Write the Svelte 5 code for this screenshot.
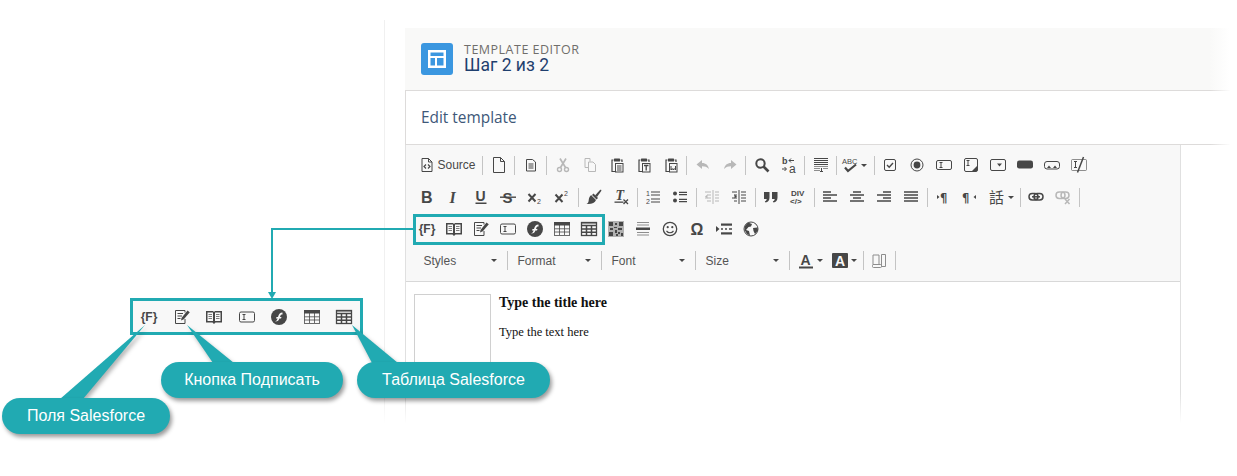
<script>
    const line = 'fill="none" stroke="currentColor"';
    const clip = `<path d="M4.500 3H3v11.500h3M11.500 3H13v2" ${line} stroke-width="1.200"/><rect x="5" y="1.500" width="6" height="3" rx=".5"/><rect x="6.500" y="6.500" width="7.500" height="8.500" fill="#f8f8f8" stroke="currentColor"/>`;

    // small 16x16 pictures for the editor toolbar
    const icons = {
        source: `<path d="M3 1.500h6.500L13 5v9.500H3z" ${line}/><path d="M9.500 1.500V5H13" ${line}/><path d="M7 7.500 5 9.500l2 2M9 7.500l2 2-2 2" ${line} stroke-width="1.200"/>`,
        newpage: `<path d="M2.500 .5h7L13.500 4.500v11h-11z" ${line}/><path d="M9.500 .5v4h4" ${line}/>`,
        preview: `<path d="M3.500 2.500h6L12.500 5v9h-9z" ${line}/><path d="M5.500 7h5M5.500 9h5M5.500 11h5" ${line}/>`,
        cut: `<circle cx="4.500" cy="12.500" r="2" ${line} stroke-width="1.400"/><circle cx="11.500" cy="12.500" r="2" ${line} stroke-width="1.400"/><path d="M5.500 10.500 11 1.500M10.500 10.500 5 1.500" ${line} stroke-width="1.700"/>`,
        copy: `<path d="M3 1.500h5v3M3 1.500v9h3" ${line}/><path d="M6.500 5h4.500l2.500 2.500v7h-7z" ${line}/>`,
        paste: `${clip}<path d="M8 9h4.500M8 11h4.500M8 13h4.500" ${line}/>`,
        pastetext: `${clip}<path d="M8 8.500h4.500M10.200 8.500v5" ${line} stroke-width="1.300"/>`,
        pasteword: `${clip}<path d="M8 9v4l1.200-1.500 1 1.500 1-1.500L12.500 13V9" ${line}/>`,
        undo: `<path d="M7 3 1.500 7.500 7 12V9.300c3 0 5 .7 7 2.700-.8-3.700-3-6-7-6z"/>`,
        redo: `<path d="M9 3l5.500 4.500L9 12V9.300c-3 0-5 .7-7 2.700.8-3.700 3-6 7-6z"/>`,
        find: `<circle cx="6.500" cy="6.500" r="4.200" ${line} stroke-width="2"/><path d="m9.500 9.500 5 5" ${line} stroke-width="2.600"/>`,
        replace: `<text x="1" y="7" font-size="9" font-family="Liberation Sans" font-weight="bold">b</text><text x="8" y="15.500" font-size="12" font-family="Liberation Sans">a</text><path d="M8 3.500h5M10 1.500l-2 2 2 2M1 12h4M3.500 10l2 2-2 2" ${line}/>`,
        templates: `<path d="M1 1.500h14M1 3.500h14M1 5.500h14M1 7.500h14" ${line} stroke-width="1.200"/><path d="M1 9.500h14M1 11.500h6M10 11.500h5M1 13.500h6" ${line} stroke-width="1.200" opacity=".6"/><path d="M8.500 11v3.500M7 14.500h3" ${line}/>`,
        spell: `<text x="0" y="7" font-size="7.500" font-family="Liberation Sans">ABC</text><path d="m3 10.500 3 3.500 8-6.500" ${line} stroke-width="2.200"/>`,
        checkbox: `<rect x="2.500" y="2.500" width="11" height="11" rx="1.500" ${line}/><path d="m5 8 2.200 2.200L11 6" ${line} stroke-width="1.400"/>`,
        radio: `<circle cx="8" cy="8" r="6" ${line}/><circle cx="8" cy="8" r="3.400"/>`,
        textfield: `<rect x=".5" y="3.500" width="15" height="9" rx="1.500" ${line}/><path d="M3.500 5.500h3M3.500 10.500h3M5 5.500v5" ${line}/>`,
        textarea: `<rect x="1.500" y="1.500" width="13" height="13" rx="1.500" ${line}/><path d="M3.500 3.500h3M3.500 8.500h3M5 3.500v5" ${line}/><path d="M14 9v5H9z"/>`,
        select: `<rect x=".5" y="2.500" width="15" height="11" rx="1.500" ${line}/><path d="M7 6.500h5L9.500 9.500z"/>`,
        button: `<rect y="3.500" width="16" height="8" rx="2.200"/>`,
        imagebutton: `<rect x=".5" y="4.500" width="15" height="7.500" rx="2.500" ${line}/><path d="m3 11 2-2.500 2 2.500zM9 11l2-2.500 2 2.500z"/>`,
        hidden: `<rect x=".5" y="2.500" width="15" height="11" rx="1" ${line} opacity=".6"/><path d="M3 4.500h3M3 10.500h3M4.500 4.500v6" ${line}/><path d="M12.500 0 6.500 15.500" ${line} stroke-width="1.500"/>`,
        bold: `<text x="2" y="14" font-size="16" font-weight="bold" font-family="Liberation Sans">B</text>`,
        italic: `<text x="3.500" y="14" font-size="16" font-weight="bold" font-style="italic" font-family="Liberation Serif">I</text>`,
        underline: `<text x="2.500" y="11.500" font-size="14" font-weight="bold" font-family="Liberation Sans">U</text><rect x="2.500" y="13.500" width="11" height="1.500"/>`,
        strike: `<text x="2.500" y="13.500" font-size="15" font-weight="bold" font-family="Liberation Sans">S</text><rect x="0" y="7.500" width="16" height="1.400"/>`,
        sub: `<path d="m1.500 5 7 7.500M8.500 5l-7 7.500" ${line} stroke-width="2"/><text x="10" y="15" font-size="7" font-family="Liberation Sans">2</text>`,
        sup: `<path d="m1.500 5.500 7 7.500M8.500 5.500l-7 7.500" ${line} stroke-width="2"/><text x="10" y="7" font-size="7" font-family="Liberation Sans">2</text>`,
        brush: `<path d="M9 6.500 14 1c.9-.7 1.700 0 1.200 1L11 8z"/><path d="M7.500 4.500 12 9l-1.500 1.500-4.500-4.500z"/><path d="M5.500 6.500 10 11c-1 2.800-4.500 4.500-9.500 4 2-1 2-2.500 2.300-4.500.2-1.800 1-3.500 2.700-4.500z"/>`,
        clear: `<text x="2.500" y="11" font-size="14" font-weight="bold" font-style="italic" font-family="Liberation Serif">T</text><rect x="1.500" y="12.500" width="9" height="1.300"/><path d="m10.500 10.500 4.500 4.500M15 10.500 10.500 15" ${line} stroke-width="1.300"/>`,
        ol: `<text x="1" y="7" font-size="7" font-family="Liberation Sans">1</text><text x="1" y="14.500" font-size="7" font-family="Liberation Sans">2</text><path d="M6 3h9M6 6h9M6 10h9M6 13h9" ${line} stroke-width="1.200"/>`,
        ul: `<circle cx="3" cy="4.500" r="2"/><circle cx="3" cy="11.500" r="2"/><path d="M7 3.300h8M7 5.700h8M7 10.300h8M7 12.700h8" ${line} stroke-width="1.200"/>`,
        outdent: `<path d="M9 1v14M1 3h6M3 6h4M1 9h6M3 12h4M11 3h4M11 6h4M11 9h4M11 12h4" ${line}/><path d="M1 7.500 3.500 5.500v4z"/>`,
        indent: `<path d="M8 1v14M1 3h5M3 6h3M1 9h5M3 12h3M10 3h5M10 6h5M10 9h5M10 12h5" ${line}/><path d="M6 7.500 3.500 5.500v4z"/>`,
        quote: `<path d="M1 3h5.500v5.500c0 3-1.500 4.800-4 5l-.7-1.300c1.300-.3 1.800-1 1.900-2.200H1zM9 3h5.500v5.500c0 3-1.500 4.800-4 5l-.7-1.300c1.300-.3 1.800-1 1.900-2.200H9z"/>`,
        div: `<text x="1" y="7" font-size="8" font-family="Liberation Sans" font-weight="bold">DIV</text><text x="0" y="15" font-size="8" font-family="Liberation Sans" font-weight="bold">&lt;/&gt;</text>`,
        left: `<path d="M1 3h8M1 6h14M1 9h8M1 12h14" ${line} stroke-width="1.500"/>`,
        center: `<path d="M4 3h8M1 6h14M4 9h8M1 12h14" ${line} stroke-width="1.500"/>`,
        right: `<path d="M7 3h8M1 6h14M7 9h8M1 12h14" ${line} stroke-width="1.500"/>`,
        justify: `<path d="M1 3h14M1 6h14M1 9h14M1 12h14" ${line} stroke-width="1.500"/>`,
        ltr: `<path d="M2 6v4l2.500-2z"/><text x="5" y="13" font-size="11.500" font-weight="bold" font-family="DejaVu Sans">¶</text>`,
        rtl: `<text x="0" y="13" font-size="11.500" font-weight="bold" font-family="DejaVu Sans">¶</text><path d="M14 6v4l-2.500-2z"/>`,
        lang: `<text x="0" y="14" font-size="15" font-family="Noto Sans CJK TC">話</text>`,
        link: `<rect x="1" y="4.500" width="9" height="6.500" rx="3.200" ${line} stroke-width="1.500"/><rect x="6" y="4.500" width="9" height="6.500" rx="3.200" ${line} stroke-width="1.500"/><path d="M4 7.800h8" ${line} stroke-width="1.500"/>`,
        unlink: `<rect x="1" y="3" width="9" height="6.500" rx="3.200" ${line} stroke-width="1.500"/><rect x="6" y="3" width="8" height="6.500" rx="3.200" ${line} stroke-width="1.500"/><path d="m10 10 4.500 5M14.500 10 10 15" ${line} stroke-width="1.500"/>`,
        field: `<text x="8" y="12" text-anchor="middle" font-size="12" font-weight="bold" font-family="Liberation Sans">{F}</text>`,
        book: `<path d="M0 2h7l1 1 1-1h7v11.500H9.500L8 15l-1.500-1.500H0z"/><path d="M1.500 3.500H7v8.500H1.500zM9 3.500h5.500V12H9z" fill="#f8f8f8"/><path d="M2.500 5.500h3.500M2.500 7.500h3.500M2.500 9.500h3.500M10 5.500h3.500M10 7.500h3.500M10 9.500h3.500" ${line} opacity=".7"/>`,
        sign: `<path d="M11 3.500V1.500H1.500v13h9.500V10" ${line}/><path d="M3.500 4.500h5.500M3.500 7h4.500M3.500 9.500h3" ${line}/><path d="m7 11.500.5-2.500L13.500 1.500l2.300 1.700-6 7z"/>`,
        input: `<rect x=".5" y="3" width="15" height="10" rx="1.500" ${line}/><path d="M3.500 5.500h3M3.500 10.500h3M5 5.500v5" ${line}/>`,
        flash: `<circle cx="8" cy="8" r="8"/><path d="M11.500 3.500C9 3.500 8 5 7.500 6.500L7 8H5.500l-.5 1.500h1.600C6 11 5.500 12 4 12.500c2.500.2 3.800-1 4.400-3H10l.5-1.500H9l.4-1.200c.3-.9.800-1.300 2.100-1.300z" fill="#f8f8f8"/>`,
        table: `<rect x=".5" y="1.500" width="15" height="13" ${line} opacity=".8"/><rect x="0" y="1" width="16" height="3.500"/><path d="M5.500 4v10M10.500 4v10M.5 7.800h15M.5 11h15" ${line} opacity=".8"/>`,
        tableDark: `<rect x=".5" y="1.500" width="15" height="13" ${line} stroke-width="1.300"/><rect x="0" y="1" width="16" height="1.500"/><path d="M0 4.500h16M5.500 4.500v10M10.500 4.500v10M.5 8h15M.5 11.200h15" ${line} stroke-width="1.500"/>`,
        qr: `<rect width="16" height="16" opacity=".4"/><path d="M1 1h4v4H1zM11 1h4v4h-4zM1 11h4v4H1zM7 2h2v2H7zM6 6h3v1H6zM10 7h4v2h-4zM2 7h3v2H2zM7 9h2v3H7zM10 11h2v2h-2zM13 12h2v3h-2zM8 13h2v2H8z"/>`,
        hr: `<path d="M2 1.500h12M2 4h12" ${line} opacity=".6"/><rect x="1" y="6.500" width="14" height="2.500"/><path d="M2 11.500h12M2 14h12" ${line} opacity=".6"/>`,
        smile: `<circle cx="8" cy="8" r="6.700" ${line} stroke-width="1.300"/><circle cx="5.700" cy="6.200" r="1.100"/><circle cx="10.300" cy="6.200" r="1.100"/><path d="M4.500 9.800c1.800 2.600 5.200 2.600 7 0" ${line} stroke-width="1.200"/>`,
        omega: `<text x="8" y="14" text-anchor="middle" font-size="16" font-weight="bold" font-family="Liberation Sans">Ω</text>`,
        pagebreak: `<path d="M0 5v6l3.500-3z"/><rect x="5" y="2.500" width="11" height="2.200"/><rect x="5" y="11.300" width="11" height="2.200"/><path d="M5 8h2M9 8h2M13 8h3" ${line} stroke-width="1.500"/>`,
        globe: `<circle cx="8" cy="8" r="7" ${line}/><path d="M5 1.500 9 3 8 5.500 5.500 6 3 9l3 1 1 4.500L4 13 1.500 9 2 5zM10 7l4.500-.5.500 3L12 13l-1.500-3z"/>`,
        color: `<text x="2.500" y="12" font-size="14" font-weight="bold" font-family="Liberation Sans">A</text><rect x="1" y="13.500" width="14" height="2"/>`,
        bgcolor: `<rect width="16" height="15" rx="1"/><text x="3" y="12.500" font-size="14" font-weight="bold" font-family="Liberation Sans" fill="#f8f8f8">A</text>`,
        maximize: `<path d="M2 2h6v9.500H2zM10.500 1.500h4v12h-4z" ${line}/><rect x="1.500" y="11.500" width="9" height="3" rx="1" ${line}/>`
    };

    const rows = [
        [
            ['source'],
            ['newpage'],
            ['preview'],
            ['-cut', '-copy', 'paste', 'pastetext', 'pasteword'],
            ['-undo', '-redo'],
            ['find', 'replace'],
            ['templates'],
            ['spell'],
            ['checkbox', 'radio', 'textfield', 'textarea', 'select', 'button', 'imagebutton', 'hidden']
        ],
        [
            ['bold', 'italic', 'underline', 'strike', 'sub', 'sup'],
            ['brush', 'clear'],
            ['ol', 'ul'],
            ['-outdent', 'indent'],
            ['quote', 'div'],
            ['left', 'center', 'right', 'justify'],
            ['ltr', 'rtl', 'lang'],
            ['link', '-unlink'],
            []
        ],
        [
            ['field', 'book', 'sign', 'input', 'flash', 'table', 'tableDark', 'qr', 'hr', 'smile', 'omega', 'pagebreak', 'globe']
        ]
    ];

    const withArrow = ['spell', 'lang'];
    const combos = ['Styles', 'Format', 'Font', 'Size'];
    const sample = ['field', 'sign', 'book', 'input', 'flash', 'table', 'tableDark'];
</script>

{#snippet icon(name)}
    <svg class="ic" viewBox="0 0 16 16" width="16" height="16" aria-hidden="true">{@html icons[name]}</svg>
{/snippet}

{#snippet arrow()}
    <span class="arrow"></span>
{/snippet}

<div class="page">
    <main class="main">
        <header class="head">
            <div class="logo">
                <svg viewBox="0 0 20 20" width="20" height="20" aria-hidden="true">
                    <path d="M1 1h18v18H1z M3.500 3.500v3.500h13V3.500z M3.500 9v7.500h4.500V9z M10 9v7.500h6.500V9z" fill="#fff" fill-rule="evenodd" />
                </svg>
            </div>
            <div class="titles">
                <div class="kicker">TEMPLATE EDITOR</div>
                <h1>Шаг 2 из 2</h1>
            </div>
        </header>

        <section class="card">
            <h2>Edit template</h2>
        </section>

        <section class="editor">
            <div class="toolbar">
                {#each rows as groups}
                    <div class="row">
                        {#each groups as group, g}
                            {#if g > 0}<span class="sep"></span>{/if}
                            <div class="group">
                                {#each group as item}
                                    {@const off = item.startsWith('-')}
                                    {@const name = off ? item.slice(1) : item}
                                    {#if name === 'source'}
                                        <span class="btn source">{@render icon(name)}<span class="label">Source</span></span>
                                    {:else if withArrow.includes(name)}
                                        <span class="btn drop {name}">{@render icon(name)}{@render arrow()}</span>
                                    {:else}
                                        <span class="btn" class:off>{@render icon(name)}</span>
                                    {/if}
                                {/each}
                            </div>
                        {/each}
                    </div>
                {/each}
                <div class="row last">
                    {#each combos as combo}
                        <div class="combo"><span>{combo}</span>{@render arrow()}</div>
                        <span class="sep"></span>
                    {/each}
                    <div class="colors">
                        <span class="tint">{@render icon('color')}{@render arrow()}</span>
                        <span class="tint">{@render icon('bgcolor')}{@render arrow()}</span>
                    </div>
                    <span class="sep"></span>
                    <div class="group"><span class="btn off dim">{@render icon('maximize')}</span></div>
                    <span class="sep"></span>
                </div>
            </div>

            <div class="content">
                <div class="thumb"></div>
                <div class="copy">
                    <h3>Type the title here</h3>
                    <p>Type the text here</p>
                </div>
            </div>
        </section>
    </main>

    <div class="zoomed">
        {#each sample as name}
            <span class="slot">{@render icon(name)}</span>
        {/each}
    </div>

    <!-- annotation layer over the screenshot -->
    <svg class="marks" width="1237" height="476" aria-hidden="true">
        <rect x="414.500" y="215.500" width="189" height="28" fill="none" stroke="#21aab2" stroke-width="3" />
        <path d="M414 229H272V294" fill="none" stroke="#21aab2" stroke-width="2" />
        <path d="M268 292h8l-4 7z" fill="#21aab2" />
        <g class="tails">
            <path d="M145 325 60 399H83z" />
            <path d="M187 325 213 363H234z" />
            <path d="M352 325 398 363H372z" />
        </g>
    </svg>

    <div class="bubble fields">Поля Salesforce</div>
    <div class="bubble sign-btn">Кнопка Подписать</div>
    <div class="bubble table-btn">Таблица Salesforce</div>
</div>

<style>
    :global(body) {
        background: #fff;
        font-family: "Liberation Sans", Arial, sans-serif;
    }

    .page {
        position: relative;
        width: 1237px;
        height: 476px;
        box-sizing: border-box;
        padding-top: 20px;
        overflow: hidden;
        background: #fff;
    }

    /* main column */
    .main {
        position: relative;
        margin-left: 384px;
        width: 846px;
        height: 403px;
        padding: 8px 0 0 20px;
        box-sizing: border-box;
        border-left: 1px solid #f0f0f0;
    }

    .main::after {
        content: "";
        position: absolute;
        left: -1px;
        right: 0;
        bottom: 0;
        height: 30px;
        background: linear-gradient(rgba(255, 255, 255, 0), #fff);
    }

    .head {
        display: flex;
        align-items: center;
        gap: 11px;
        height: 62px;
        box-sizing: border-box;
        padding-left: 16px;
        background: linear-gradient(to right, #f9f9f8 97.500%, rgba(249, 249, 248, 0));
    }

    .logo {
        width: 32px;
        height: 32px;
        border-radius: 3px;
        background: #3b97e0;
        display: flex;
        align-items: center;
        justify-content: center;
    }

    .titles {
        font-family: "Open Sans", sans-serif;
        line-height: 1;
    }

    .kicker {
        font-size: 12.500px;
        color: #706e6b;
        letter-spacing: .5px;
        margin-bottom: 1px;
    }

    h1 {
        margin: 0;
        font-family: Roboto, sans-serif;
        font-size: 17.500px;
        font-weight: 400;
        color: #1f3f6e;
    }

    .card {
        height: 55px;
        box-sizing: border-box;
        display: flex;
        align-items: center;
        padding-left: 15px;
        background: #fff;
        border-style: solid;
        border-width: 1px 0 1px 1px;
        border-image: linear-gradient(to right, #dddbda 97.500%, rgba(221, 219, 218, 0)) 1;
    }

    h2 {
        margin: 0;
        font-family: "Open Sans", sans-serif;
        font-size: 15.400px;
        font-weight: 400;
        color: #3e5879;
    }

    .editor {
        width: 776px;
        height: 278px;
        box-sizing: border-box;
        border: 1px solid #e0e0e0;
        border-top: none;
        border-bottom: none;
    }

    .toolbar {
        background: #f8f8f8;
        border-bottom: 1px solid #d8d8d8;
        padding: 4px 0 5px 7.500px;
        height: 137px;
        box-sizing: border-box;
    }

    .row {
        display: flex;
        align-items: center;
        height: 32px;
        color: #474747;
    }

    .row.last {
        height: 31px;
        font-size: 12px;
    }

    .group {
        display: flex;
        align-items: center;
        padding: 0 2px;
    }

    .group:first-child {
        padding-left: 0;
    }

    .sep {
        width: 1px;
        height: 19px;
        background: #c4c4c4;
        flex: none;
    }

    .btn {
        display: flex;
        align-items: center;
        justify-content: center;
        width: 27px;
        height: 24px;
        flex: none;
    }

    .btn.off {
        color: #b8b8b8;
    }

    .btn.dim {
        color: #8d8d8d;
    }

    .btn.source {
        width: 66.500px;
        justify-content: flex-start;
        padding-left: 5px;
        box-sizing: border-box;
        gap: 3px;
    }

    .label {
        font-size: 12px;
        color: #484848;
    }

    .btn.drop {
        justify-content: flex-start;
        gap: 1px;
    }

    .btn.spell {
        width: 32.500px;
        padding-left: 3px;
        box-sizing: border-box;
    }

    .btn.lang {
        width: 34px;
        padding-left: 5px;
        box-sizing: border-box;
    }

    .arrow {
        width: 0;
        height: 0;
        margin-left: 2px;
        border: 3px solid transparent;
        border-top: 3px solid #474747;
        border-bottom: none;
        flex: none;
    }

    .combo {
        width: 93px;
        box-sizing: border-box;
        display: flex;
        align-items: center;
        justify-content: space-between;
        padding: 0 10px;
        color: #555;
    }

    .colors {
        display: flex;
        padding-left: 8px;
        padding-right: 6px;
        gap: 9px;
    }

    .tint {
        display: flex;
        align-items: center;
        gap: 1px;
    }

    .ic {
        display: block;
        flex: none;
        fill: currentColor;
        overflow: visible;
    }

    /* document preview */
    .content {
        display: flex;
        gap: 8px;
        padding: 12px 0 0 8px;
        font-family: "Liberation Serif", "Times New Roman", serif;
        color: #111;
    }

    .thumb {
        width: 77px;
        height: 90px;
        box-sizing: border-box;
        border: 1px solid #d0d0d0;
    }

    h3 {
        margin: 0 0 14px;
        font-size: 14px;
        font-weight: bold;
        line-height: 17px;
    }

    p {
        margin: 0;
        font-size: 12.500px;
        line-height: 14px;
    }

    /* annotations */
    .marks {
        position: absolute;
        left: 0;
        top: 0;
    }

    .tails {
        fill: #21aab2;
        filter: drop-shadow(2px 3px 2px rgba(0, 0, 0, .3));
    }

    .zoomed {
        position: absolute;
        left: 130px;
        top: 298px;
        width: 233px;
        height: 37px;
        box-sizing: border-box;
        border: 3px solid #21aab2;
        background: #f8f8f8;
        display: flex;
        align-items: center;
        color: #474747;
    }

    .slot {
        width: 32.500px;
        display: flex;
        justify-content: center;
        flex: none;
    }

    .bubble {
        position: absolute;
        height: 36px;
        box-sizing: border-box;
        border-radius: 18px;
        background: #21aab2;
        box-shadow: 2px 3px 4px rgba(0, 0, 0, .4);
        color: #fff;
        font-size: 16px;
        display: flex;
        align-items: center;
        justify-content: center;
    }

    .fields {
        left: 2px;
        top: 398px;
        width: 168px;
    }

    .sign-btn {
        left: 161px;
        top: 362px;
        width: 182px;
    }

    .table-btn {
        left: 357px;
        top: 362px;
        width: 193px;
    }
</style>
